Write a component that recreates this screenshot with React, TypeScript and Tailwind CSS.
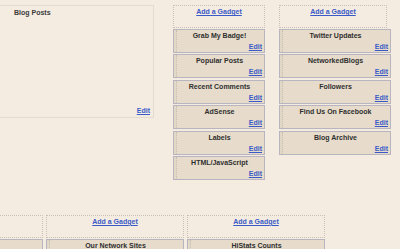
import React from "react";

const font = { fontFamily: '"Liberation Sans", Arial, sans-serif' };

function AddGadget({ w }: { w: string }) {
  return (
    <div className={`${w} h-[23px] border border-dotted border-[#c9c0b3] flex justify-center pt-[1px]`}>
      <a className="text-[7px] font-bold text-[#3a5bc7] underline leading-[9px]">Add a Gadget</a>
    </div>
  );
}

function Widget({ title, w }: { title: string; w: string }) {
  return (
    <div className={`${w} h-[24px] border border-[#b9b5c0] bg-[#e7dccb] flex`}>
      <div className="w-[3px] h-full border-r border-dotted border-[#c9c0b0] bg-[#e2d8c8]" />
      <div className="flex-1 flex flex-col pr-[2px]">
        <div className="text-center text-[7px] font-bold text-[#2f2f2f] leading-[9px] pt-[1px] whitespace-nowrap">{title}</div>
        <div className="flex justify-end mt-auto pb-[1px]">
          <a className="text-[7px] font-bold text-[#3a5bc7] underline leading-[8px]">Edit</a>
        </div>
      </div>
    </div>
  );
}

export default function App() {
  return (
    <div className="w-[400px] h-[249px] bg-[#f4ebe1] overflow-hidden relative" style={font}>
      <div className="flex items-start pt-[5px]">
        <div className="w-[154px] h-[113px] border border-l-0 border-[#e4dbcf] flex flex-col">
          <div className="pl-[14px] pt-[2px] text-[7px] font-bold text-[#3a3a3a] leading-[9px]">Blog Posts</div>
          <div className="flex justify-end mt-auto pr-[3px] pb-[2px]">
            <a className="text-[7px] font-bold text-[#3a5bc7] underline leading-[8px]">Edit</a>
          </div>
        </div>
        <div className="ml-[19px] flex flex-col">
          <AddGadget w="w-[92px]" />
          <div className="mt-[1px] flex flex-col gap-[1.4px]">
            {["Grab My Badge!", "Popular Posts", "Recent Comments", "AdSense", "Labels", "HTML/JavaScript"].map((t) => (
              <Widget key={t} title={t} w="w-[92px]" />
            ))}
          </div>
        </div>
        <div className="ml-[14px] flex flex-col">
          <AddGadget w="w-[108px]" />
          <div className="mt-[1px] flex flex-col gap-[1.4px]">
            {["Twitter Updates", "NetworkedBlogs", "Followers", "Find Us On Facebook", "Blog Archive"].map((t) => (
              <Widget key={t} title={t} w="w-[112px]" />
            ))}
          </div>
        </div>
      </div>
      <div className="flex items-start mt-[35px] ml-[-95px] gap-[3px]">
        {[
          { w: "w-[138px]", t: "" },
          { w: "w-[138px]", t: "Our Network Sites" },
          { w: "w-[138px]", t: "HiStats Counts" },
        ].map((c, i) => (
          <div key={i} className={`${c.w} flex flex-col gap-[1px]`}>
            <AddGadget w="w-full" />
            <Widget title={c.t} w="w-full" />
          </div>
        ))}
      </div>
    </div>
  );
}
